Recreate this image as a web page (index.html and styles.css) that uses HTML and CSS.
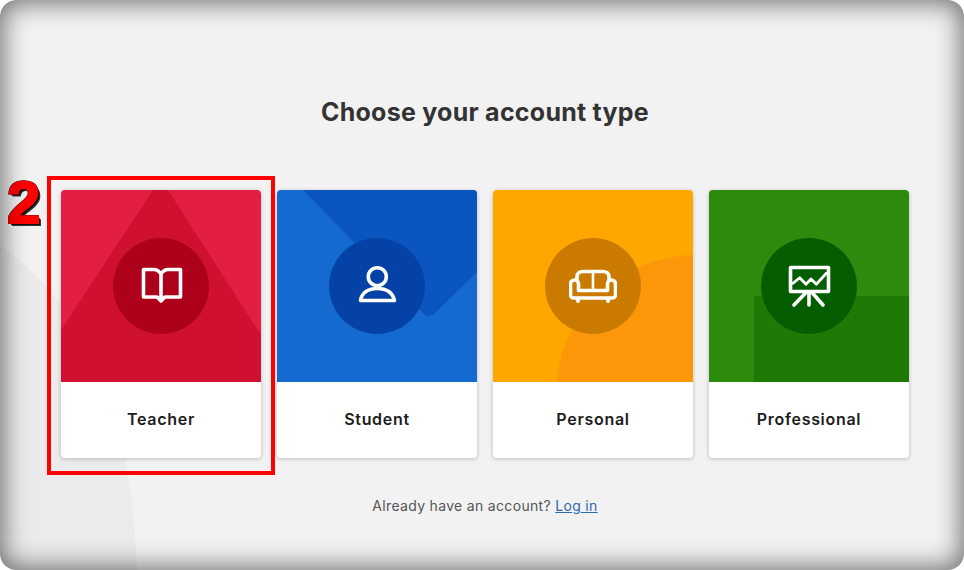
FILE: index.html
```html
<!DOCTYPE html>
<html lang="en">
<head>
    <meta charset="UTF-8">
    <title>Choose your account type</title>
    <link rel="stylesheet" href="styles.css">
</head>
<body>
<div class="frame">
    <svg class="blob" width="140" height="330" viewBox="0 0 140 330"><path d="M0 5C60 50 130 130 137 330H0Z"/></svg>
    <h1>Choose your account type</h1>
    <div class="cards">
        <div class="card">
            <div class="art art-teacher">
                <svg class="shape" viewBox="0 0 200 192"><polygon points="92,0 107,0 200,145 200,192 0,192 0,140" fill="#d01031"/></svg>
                <div class="circle circle-teacher">
                    <svg class="icon" viewBox="0 0 48 48"><path d="M24 12C22 9 20 7.5 17 7.5H6.5V35H20L24 39L28 35H43.5V7.5H31C28 7.5 26 9 24 12V37"/></svg>
                </div>
            </div>
            <div class="label">Teacher</div>
            <div class="marker"></div>
            <div class="step">2</div>
        </div>
        <div class="card">
            <div class="art art-student">
                <svg class="shape" viewBox="0 0 200 192"><polygon points="26,0 200,0 200,82 156,125 150,126 145,122" fill="#0b55c0"/></svg>
                <div class="circle circle-student">
                    <svg class="icon" viewBox="0 0 48 48"><circle cx="24.3" cy="14.7" r="9"/><path d="M7.5 38.5C9 30 16 26.5 24.3 26.5C32.5 26.5 39.5 30 41.5 38.5Z"/></svg>
                </div>
            </div>
            <div class="label">Student</div>
        </div>
        <div class="card">
            <div class="art art-personal">
                <svg class="shape" viewBox="0 0 200 192"><circle cx="203" cy="205" r="140" fill="#fb9708"/></svg>
                <div class="circle circle-personal">
                    <svg class="icon" viewBox="0 0 48 48"><path d="M8 18V15C8 11 11 9.5 14 9.5H34C37 9.5 40 11 40 15V18"/><path d="M24 10V27" stroke-width="2.6"/><path d="M5 36H43C45 36 46.5 34.5 46.5 33V22C46.5 19.5 44.5 18 42.5 18C40 18 38.5 20 38.5 22V28.5H9.5V22C9.5 20 8 18 5.5 18C3.5 18 1.5 19.5 1.5 22V33C1.5 34.5 3 36 5 36Z"/><path d="M9 37V39M39 37V39" stroke-width="4"/></svg>
                </div>
            </div>
            <div class="label">Personal</div>
        </div>
        <div class="card">
            <div class="art art-professional">
                <svg class="shape" viewBox="0 0 200 192"><rect x="45" y="106" width="155" height="86" fill="#1f7a05"/></svg>
                <div class="circle circle-professional">
                    <svg class="icon" viewBox="0 0 48 48"><path d="M5.5 5.5H43.5V29.5H5.5Z"/><path d="M8 21.3L14.7 15.7L21 22.3L26 17L31.3 22.3L41.3 11.3" stroke-width="2.8"/><path d="M24 30V43M21.5 30L9 43M26.5 30L38 43"/></svg>
                </div>
            </div>
            <div class="label">Professional</div>
        </div>
    </div>
    <p class="login">Already have an account? <a href="#">Log in</a></p>
</div>
</body>
</html>
```

FILE: styles.css
```css
body{
    margin: 0;
    background: #fff;
}
.frame{
    width: 964px;
    height: 570px;
    box-sizing: border-box;
    padding-top: 97px;
    position: relative;
    overflow: hidden;
    border-radius: 16px;
    background: #f2f2f2;
    font-family: Inter, "Liberation Sans", sans-serif;
}
/* vignette on top of everything */
.frame::after{
    content: "";
    position: absolute;
    top: 0;
    left: 0;
    right: 0;
    bottom: 0;
    border-radius: 16px;
    box-shadow: inset 0 0 26px 3px rgba(0,0,0,.55);
    pointer-events: none;
}
.blob{
    position: absolute;
    left: 0;
    bottom: 0;
    fill: #ebebeb;
}
h1{
    position: relative;
    margin: 0;
    padding-left: 6px;
    text-align: center;
    font-size: 25px;
    letter-spacing: .25px;
    line-height: 30px;
    font-weight: 700;
    color: #333;
}
.cards{
    position: relative;
    display: flex;
    gap: 16px;
    margin: 63px 0 0 61px;
}
.card{
    position: relative;
    width: 200px;
    height: 268px;
    border-radius: 4px;
    background: #fff;
    box-shadow: 0 1px 4px rgba(0,0,0,.22);
}
.art{
    position: relative;
    height: 192px;
    display: flex;
    align-items: center;
    justify-content: center;
    overflow: hidden;
    border-radius: 4px 4px 0 0;
}
.shape{
    position: absolute;
    top: 0;
    left: 0;
    width: 200px;
    height: 192px;
}
.art-teacher{background: #e31e43}
.art-student{background: #146acf}
.art-personal{background: #ffa700}
.art-professional{background: #2c8a0d}
.circle{
    position: relative;
    width: 96px;
    height: 96px;
    border-radius: 50%;
    display: flex;
    align-items: center;
    justify-content: center;
}
.circle-teacher{background: #ad001b}
.circle-student{background: #0443a5}
.circle-personal{background: #cb7a00}
.circle-professional{background: #045e00}
.icon{
    width: 48px;
    height: 48px;
    fill: none;
    stroke: #fff;
    stroke-width: 3.6;
    stroke-linejoin: round;
    stroke-linecap: round;
}
.label{
    height: 74px;
    display: flex;
    align-items: center;
    justify-content: center;
    font-size: 16px;
    letter-spacing: .7px;
    font-weight: 600;
    color: #1c1c1c;
}
.marker{
    position: absolute;
    top: -14px;
    left: -14px;
    width: 220px;
    height: 291px;
    border: 4px solid #f00;
}
.step{
    position: absolute;
    top: -20px;
    left: -54px;
    font-family: "Liberation Sans", sans-serif;
    font-size: 60px;
    line-height: 66px;
    font-weight: 700;
    color: #f00;
    -webkit-text-stroke: 2px #f00;
    text-shadow: 2px 2px 0 #111, -1px -1px 0 #111, 1px -1px 0 #111, -1px 1px 0 #111, 3px 3px 0 #333;
}
.login{
    position: relative;
    margin: 37px 0 0;
    padding-left: 6px;
    text-align: center;
    font-size: 14px;
    letter-spacing: .32px;
    line-height: 22px;
    color: #555;
}
.login a{
    color: #2a69b0;
}
```
